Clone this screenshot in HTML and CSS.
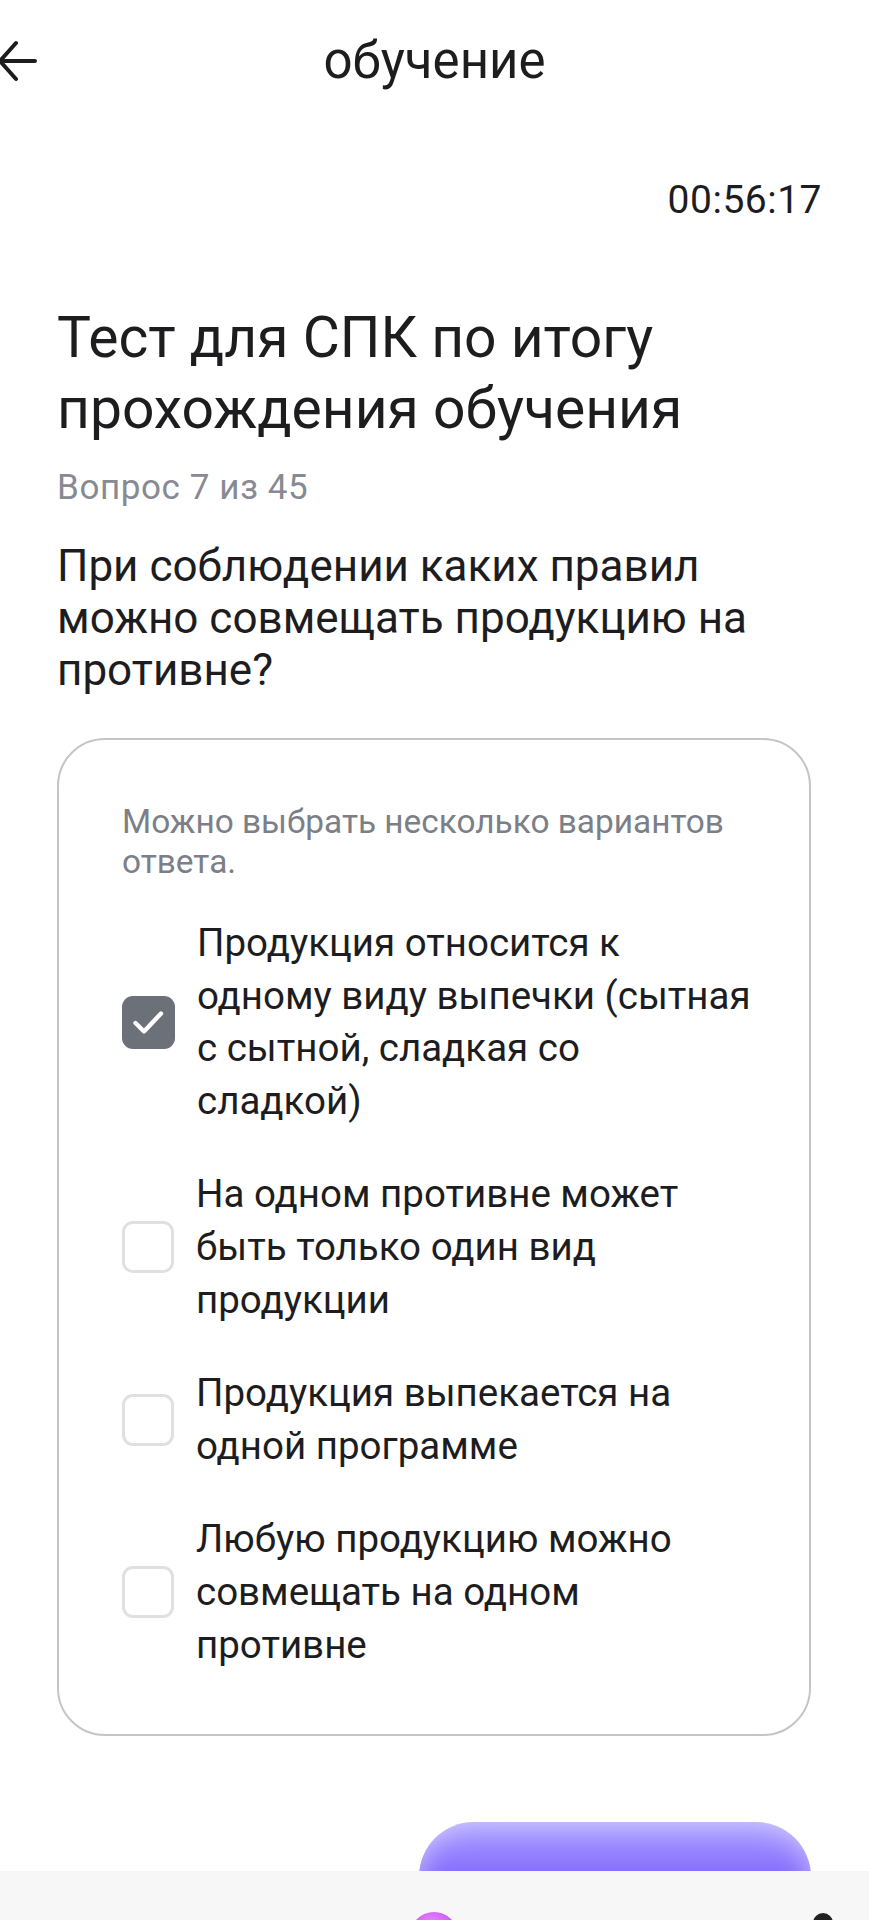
FILE: index.html
```html
<!DOCTYPE html>
<html lang="ru">
<head>
<meta charset="utf-8">
<title>обучение</title>
<link rel="stylesheet" href="styles.css">
</head>
<body>
<header class="topbar">
  <div class="topbar-left">
    <svg class="back" width="40" height="44" viewBox="0 0 40 44" aria-hidden="true">
      <path d="M37 22 H3 M18 4 L2 22 L18 40" fill="none" stroke="#1d1d1f" stroke-width="4" stroke-linecap="round" stroke-linejoin="round"/>
    </svg>
  </div>
  <div class="topbar-title">обучение</div>
  <div class="topbar-right"></div>
</header>

<div class="timer">00:56:17</div>

<main class="content">
  <h1 class="test-title">Тест для СПК по итогу прохождения обучения</h1>
  <div class="progress">Вопрос 7 из 45</div>
  <h2 class="question">При соблюдении каких правил можно совмещать продукцию на противне?</h2>

  <section class="card">
    <p class="hint">Можно выбрать несколько вариантов ответа.</p>
    <div class="options">
      <label class="option">
        <span class="box box-checked">
          <svg width="53" height="53" viewBox="0 0 53 53" aria-hidden="true"><path d="M13.5 27 L22 35.5 L39 17.5" fill="none" stroke="#fff" stroke-width="4.4" stroke-linecap="round" stroke-linejoin="round"/></svg>
        </span>
        <span class="option-text">Продукция относится к одному виду выпечки (сытная с сытной, сладкая со<br>сладкой)</span>
      </label>
      <label class="option">
        <span class="box"></span>
        <span class="option-text">На одном противне может быть только один вид продукции</span>
      </label>
      <label class="option">
        <span class="box"></span>
        <span class="option-text">Продукция выпекается на одной программе</span>
      </label>
      <label class="option">
        <span class="box"></span>
        <span class="option-text">Любую продукцию можно совмещать на одном противне</span>
      </label>
    </div>
  </section>

  <div class="actions">
    <button class="next-btn" type="button"></button>
  </div>
</main>

<nav class="tabbar">
  <span class="tab-avatar"></span>
  <span class="tab-dot"></span>
</nav>
</body>
</html>
```
FILE: styles.css
```css
html, body {
  margin: 0;
  padding: 0;
  background: #ffffff;
}
body {
  font-family: Roboto, "Noto Sans", "Liberation Sans", sans-serif;
  color: #1d1d1f;
  width: 869px;
  min-height: 1920px;
  overflow: hidden;
}

.topbar {
  height: 122px;
  display: grid;
  grid-template-columns: 1fr auto 1fr;
  align-items: center;
}
.topbar-left {
  display: flex;
  align-items: center;
}
.back {
  display: block;
  margin-left: -2px;
}
.topbar-title {
  font-size: 51px;
  line-height: 60px;
  color: #1d1d1f;
}

.timer {
  margin-top: 55px;
  padding-right: 47px;
  text-align: right;
  font-size: 39px;
  line-height: 46px;
  letter-spacing: 0.5px;
  color: #1d1d1f;
}

.content {
  padding: 0 58px 0 57px;
}

.test-title {
  margin: 79px 0 0;
  font-size: 57px;
  line-height: 71px;
  font-weight: 400;
  color: #1d1d1f;
}

.progress {
  margin-top: 24px;
  font-size: 35px;
  line-height: 40px;
  letter-spacing: 0.6px;
  color: #878a92;
}

.question {
  margin: 32px 0 0;
  font-size: 44px;
  line-height: 52px;
  font-weight: 400;
  color: #1d1d1f;
}

.card {
  margin-top: 42px;
  border: 2px solid #c3c5ca;
  border-radius: 48px;
  padding: 62px 46px 63px 63px;
}

.hint {
  margin: 0;
  font-size: 33.4px;
  line-height: 40px;
  color: #7c7f87;
}

.options {
  margin-top: 35px;
  display: flex;
  flex-direction: column;
  gap: 41px;
}

.option {
  display: flex;
  align-items: center;
  gap: 22px;
}

.box {
  flex: 0 0 auto;
  width: 52px;
  height: 52px;
  box-sizing: border-box;
  border: 3px solid #e0e0e2;
  border-radius: 11px;
  display: flex;
  align-items: center;
  justify-content: center;
}
.box-checked {
  width: 53px;
  height: 53px;
  background: #6b7079;
  border: none;
}
.box-checked svg {
  display: block;
}

.option-text {
  flex: 0 1 auto;
  max-width: 558px;
  font-size: 38.5px;
  line-height: 52.6px;
  color: #1d1d1f;
}

.actions {
  margin-top: 86px;
  display: flex;
  justify-content: flex-end;
}

.next-btn {
  width: 392px;
  height: 110px;
  border: none;
  border-radius: 56px;
  background: linear-gradient(180deg, #ada2ff 0%, #9682ff 28%, #7c61ff 58%, #7357ff 100%);
  box-shadow: inset 0 0 28px rgba(255, 255, 255, 0.5);
  padding: 0;
}

.tabbar {
  position: fixed;
  left: 0;
  right: 0;
  bottom: 0;
  height: 49px;
  background: #f7f7f8;
  overflow: hidden;
}
.tab-avatar {
  position: absolute;
  left: 410px;
  top: 41px;
  width: 48px;
  height: 48px;
  border-radius: 50%;
  background: radial-gradient(circle at 45% 30%, #ec8cff 0%, #c64ff0 60%, #a83ce0 100%);
}
.tab-dot {
  position: absolute;
  left: 813px;
  top: 42px;
  width: 20px;
  height: 20px;
  border-radius: 50%;
  background: #222;
}
```
